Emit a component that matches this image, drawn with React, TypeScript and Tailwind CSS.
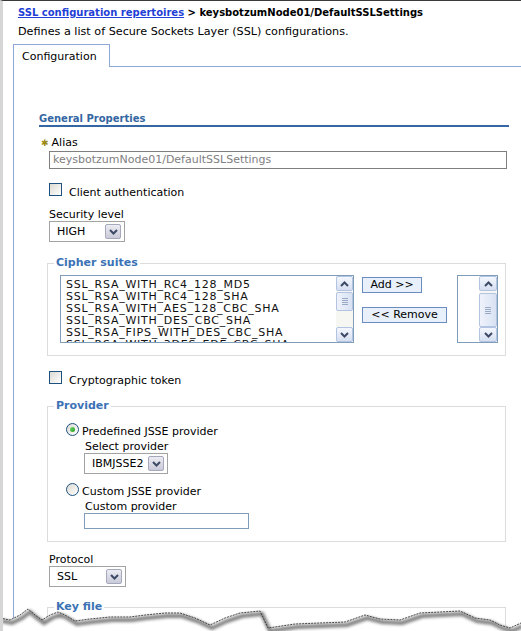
import type { ReactNode } from "react";

// --- small drawn widgets (XP-ish form controls) ---

function Chevron({ up = false }: { up?: boolean }) {
  return (
    <svg width="9" height="6" viewBox="0 0 9 6" className="block">
      <path
        d={up ? "M1 5 L4.5 1.5 L8 5" : "M1 1 L4.5 4.5 L8 1"}
        fill="none"
        stroke="#3d4a66"
        strokeWidth="2"
      />
    </svg>
  );
}

function SelectBox({ value, width }: { value: string; width: string }) {
  return (
    <div
      className={`flex h-[21px] items-center justify-between border border-[#a3a3a3] bg-white pl-[7px] pr-[3px] ${width}`}
    >
      <span className="text-[11px] leading-[12px] text-black">{value}</span>
      <span className="flex h-[15px] w-[16px] items-center justify-center rounded-[2px] border border-[#a6a8bc] bg-gradient-to-b from-[#ececf3] to-[#c9cad9]">
        <Chevron />
      </span>
    </div>
  );
}

function ScrollBtn({ up = false }: { up?: boolean }) {
  return (
    <span className="flex h-[15px] w-full items-center justify-center rounded-[2px] border border-[#b3c3e2] bg-gradient-to-b from-[#f4f7fd] to-[#d6dff1]">
      <Chevron up={up} />
    </span>
  );
}

function Scrollbar({ thumb, width }: { thumb: string; width: string }) {
  return (
    <div className={`flex h-full flex-col bg-[#f6f6f3] ${width}`}>
      <ScrollBtn up />
      <div className="flex-1">
        <div
          className={`flex w-full flex-col items-center justify-center gap-[1px] rounded-[2px] border border-[#b3c3e2] bg-gradient-to-r from-[#eef2fb] to-[#d9e2f3] ${thumb}`}
        >
          <span className="h-px w-[6px] bg-[#9aa9c6]" />
          <span className="h-px w-[6px] bg-[#9aa9c6]" />
          <span className="h-px w-[6px] bg-[#9aa9c6]" />
          <span className="h-px w-[6px] bg-[#9aa9c6]" />
        </div>
      </div>
      <ScrollBtn />
    </div>
  );
}

function Checkbox() {
  return (
    <span className="block h-[13px] w-[13px] shrink-0 border border-[#1c5180] bg-gradient-to-br from-[#dcdad2] to-white" />
  );
}

function Radio({ checked = false }: { checked?: boolean }) {
  return (
    <span className="flex h-[13px] w-[13px] shrink-0 items-center justify-center rounded-full border border-[#1c5180] bg-gradient-to-br from-[#dcdad2] to-white">
      {checked && (
        <span className="block h-[5px] w-[5px] rounded-full bg-gradient-to-br from-[#6fdc6f] to-[#1f9a1f]" />
      )}
    </span>
  );
}

function Group({
  legend,
  children,
  className = "",
}: {
  legend: string;
  children?: ReactNode;
  className?: string;
}) {
  return (
    <fieldset
      className={`-ml-[2px] w-[459px] border border-[#dcdcdc] ${className}`}
    >
      <legend className="ml-[6px] px-[2px] text-[11px] font-bold leading-[12px] text-[#3b72b5]">
        {legend}
      </legend>
      {children}
    </fieldset>
  );
}

const CIPHERS = [
  "SSL_RSA_WITH_RC4_128_MD5",
  "SSL_RSA_WITH_RC4_128_SHA",
  "SSL_RSA_WITH_AES_128_CBC_SHA",
  "SSL_RSA_WITH_DES_CBC_SHA",
  "SSL_RSA_FIPS_WITH_DES_CBC_SHA",
  "SSL_RSA_WITH_3DES_EDE_CBC_SHA",
];

// torn paper edge along the bottom of the screenshot
const TEAR: [number, number][] = [
  [0, 618], [10, 620], [20, 615], [28, 609], [35, 615], [42, 620],
  [50, 615], [58, 612], [65, 615], [75, 621], [90, 619], [110, 617],
  [130, 617], [145, 615], [165, 613], [180, 613], [195, 618], [210, 625],
  [225, 618], [240, 613], [260, 611], [268, 628], [295, 624], [320, 623],
  [345, 622], [365, 615], [380, 619], [400, 620], [420, 613], [440, 612],
  [460, 611], [475, 618], [490, 620], [500, 625], [510, 628], [521, 623],
];

function TornEdge() {
  const line = TEAR.map(([x, y]) => `${x},${y}`).join(" ");
  return (
    <svg
      className="absolute -left-[3px] top-[599px] h-[32px] w-[521px]"
      viewBox="0 600 521 32"
    >
      <defs>
        <filter id="tear-blur" x="-5%" y="-50%" width="110%" height="200%">
          <feGaussianBlur stdDeviation="1.6" />
        </filter>
      </defs>
      <polygon points={`${line} 521,632 0,632`} fill="#ffffff" />
      <polyline
        points={line}
        transform="translate(2 3)"
        fill="none"
        stroke="#5e5e5e"
        strokeWidth="4"
        opacity="0.8"
        filter="url(#tear-blur)"
      />
      <polyline
        points={line}
        fill="none"
        stroke="#222"
        strokeWidth="0.8"
        strokeDasharray="2 1"
      />
    </svg>
  );
}

export default function App() {
  return (
    <div className="relative h-[631px] w-[521px] overflow-hidden border-l-[3px] border-t border-l-[#d6d6d6] border-t-[#3a3a3a] bg-white font-['DejaVu_Sans',sans-serif] text-[11px] leading-[12px] text-black">
      <div className="pl-[15px] pt-[6px]">
        <div className="text-[10px] font-bold">
          <a href="#" className="text-[#1f3fd6] underline">
            SSL configuration repertoires
          </a>{" "}
          &gt; keysbotzumNode01/DefaultSSLSettings
        </div>
        <p className="mt-[7px] text-[11.2px]">
          Defines a list of Secure Sockets Layer (SSL) configurations.
        </p>
      </div>

      {/* tab strip */}
      <div className="ml-[10px] mt-[6px] flex items-end">
        <div className="h-[23px] w-[97px] border-l border-r border-t border-[#8fa7d8] pl-[8px] pt-[6px]">
          Configuration
        </div>
        <div className="h-[23px] flex-1 border-b border-[#8fa7d8]" />
      </div>

      {/* tab panel */}
      <div className="ml-[10px] h-[600px] border-l border-[#8fa7d8] pl-[25px] pt-[46px]">
        <h2 className="w-[470px] border-b-2 border-[#3366a2] text-[10px] font-bold leading-[12px] text-[#3366a2]">
          General Properties
        </h2>

        <div className="pl-[10px]">
          <div className="-ml-[8px] mt-[10px] flex items-center gap-[3px]">
            <span className="text-[9px] text-[#9a8a10]">✱</span>
            <span>Alias</span>
          </div>
          <div className="mt-[2px] flex h-[18px] w-[458px] items-center border border-[#7f7f7f] pl-[3px] text-[11px] text-[#808080]">
            keysbotzumNode01/DefaultSSLSettings
          </div>

          <div className="mt-[14px] flex gap-[7px]">
            <Checkbox />
            <span className="mt-[4px]">Client authentication</span>
          </div>

          <div className="mt-[10px]">Security level</div>
          <SelectBox value="HIGH" width="w-[76px]" />

          <Group legend="Cipher suites" className="mt-[15px] pb-[12px]">
            <div className="mt-[6px] flex items-start pl-[12px]">
              <div className="flex h-[68px] w-[294px] border border-[#7f9db9] bg-white">
                <div className="flex-1 overflow-hidden pl-[5px] pt-[3px] text-[11px] leading-[12px] tracking-[0.75px] text-[#111]">
                  {CIPHERS.map((c) => (
                    <div key={c} className="h-[12px] whitespace-nowrap">
                      {c}
                    </div>
                  ))}
                </div>
                <Scrollbar width="w-[17px]" thumb="h-[19px] mt-[1px]" />
              </div>

              <div className="ml-[8px] mt-[2px] flex w-[85px] flex-col items-start">
                <button className="h-[16px] w-[60px] border border-[#6b8cc1] bg-[#e8f0fb] text-[11px] leading-[12px]">
                  Add &gt;&gt;
                </button>
                <button className="mt-[14px] h-[16px] w-[85px] border border-[#6b8cc1] bg-[#e8f0fb] text-[11px] leading-[12px]">
                  &lt;&lt; Remove
                </button>
              </div>

              <div className="ml-[10px] flex h-[68px] w-[41px] justify-end border border-[#7f9db9] bg-white">
                <Scrollbar width="w-[18px]" thumb="h-[34px] mt-[2px]" />
              </div>
            </div>
          </Group>

          <div className="mt-[15px] flex gap-[7px]">
            <Checkbox />
            <span className="mt-[4px]">Cryptographic token</span>
          </div>

          <Group legend="Provider" className="mt-[13px] pb-[12px]">
            <div className="mt-[11px] pl-[18px]">
              <div className="flex gap-[3px]">
                <Radio checked />
                <span className="mt-[3px]">Predefined JSSE provider</span>
              </div>
              <div className="pl-[18px]">
                <div className="mt-[3px] pl-[1px]">Select provider</div>
                <SelectBox value="IBMJSSE2" width="w-[84px]" />
              </div>
              <div className="mt-[9px] flex gap-[3px]">
                <Radio />
                <span className="mt-[3px]">Custom JSSE provider</span>
              </div>
              <div className="pl-[18px]">
                <div className="mt-[3px] pl-[1px]">Custom provider</div>
                <div className="h-[16px] w-[165px] border border-[#7f9db9] bg-white" />
              </div>
            </div>
          </Group>

          <div className="mt-[12px]">Protocol</div>
          <SelectBox value="SSL" width="w-[77px]" />

          <Group legend="Key file" className="mt-[14px] h-[60px]" />
        </div>
      </div>

      <TornEdge />
    </div>
  );
}
